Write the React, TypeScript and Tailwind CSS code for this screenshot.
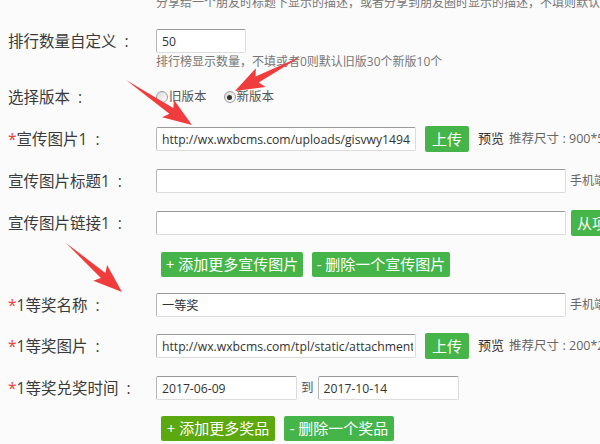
import React from "react";

const FONT = "font-['Open_Sans','Noto_Sans_CJK_SC',sans-serif]";

// Chinese full-width colon drawn centred in its box, the way the page's font does it
function Colon({ w }: { w: string }) {
  return <span className={`inline-block text-center ${w}`}>:</span>;
}

function Label({ required, children }: { required?: boolean; children: React.ReactNode }) {
  return (
    <div className="w-[148px] shrink-0 whitespace-nowrap text-[15.5px] leading-[24px] text-[#3a3a3a]">
      {required && <span className="text-[#e8413c]">*</span>}
      {children}
      <Colon w="w-[20px]" />
    </div>
  );
}

function TextInput({ value = "", width }: { value?: string; width: string }) {
  return (
    <input
      readOnly
      value={value}
      className={`${width} h-[24px] shrink-0 rounded-[2px] border border-t-[#9a9a9a] border-l-[#b8b8b8] border-r-[#dcdcdc] border-b-[#dcdcdc] bg-white pl-[5px] pr-[2px] text-[12.2px] text-[#333] outline-none ${FONT}`}
    />
  );
}

function GreenButton({ children, className = "" }: { children: React.ReactNode; className?: string }) {
  return (
    <button
      className={`flex h-[25px] shrink-0 items-center justify-center whitespace-nowrap rounded-[2px] text-[15px] text-white ${className}`}
    >
      {children}
    </button>
  );
}

function UploadExtras({ size }: { size: string }) {
  return (
    <>
      <GreenButton className="ml-[9px] h-[26px] w-[44px] bg-[#45b549]">上传</GreenButton>
      <span className="ml-[9px] whitespace-nowrap text-[13px] text-[#333]">预览</span>
      <span className="ml-[5px] whitespace-nowrap text-[12.5px] text-[#666]">
        推荐尺寸
        <Colon w="w-[10px]" />
        {size}
      </span>
    </>
  );
}

function Radio({ checked }: { checked?: boolean }) {
  return (
    <span className="flex h-[12px] w-[12px] shrink-0 items-center justify-center rounded-full border border-[#9c9c9c] bg-gradient-to-br from-[#d9d9d9] to-white">
      {checked && <span className="h-[5px] w-[5px] rounded-full bg-[#333]" />}
    </span>
  );
}

type Arrow = [number, number, number, number];

const arrows: Arrow[] = [
  [302, 56, 235, 91],
  [126, 80, 192, 125],
  [66, 243, 122, 292],
];

function arrowPoints([x1, y1, x2, y2]: Arrow) {
  const dx = x2 - x1;
  const dy = y2 - y1;
  const len = Math.hypot(dx, dy);
  const ux = dx / len;
  const uy = dy / len;
  const nx = -uy;
  const ny = ux;
  const hl = 25;
  const hw = 10.5;
  const sw = 3.4;
  const notch = 4;
  const local: [number, number][] = [
    [0, 0],
    [len - hl, sw],
    [len - hl - notch, hw],
    [len, 0],
    [len - hl - notch, -hw],
    [len - hl, -sw],
  ];
  return local
    .map(([a, p]) => `${(x1 + a * ux + p * nx).toFixed(1)},${(y1 + a * uy + p * ny).toFixed(1)}`)
    .join(" ");
}

export default function App() {
  return (
    <div className={`relative h-[444px] w-[600px] overflow-hidden bg-[#fbfbfb] ${FONT}`}>
      <div className="flex flex-col pl-[8px]">
        {/* cut-off hint from the previous field */}
        <div className="-mt-[6px] flex h-[18px] items-center">
          <div className="w-[148px] shrink-0" />
          <span className="whitespace-nowrap text-[12px] leading-[18px] text-[#777]">
            分享给一个朋友时标题下显示的描述，或者分享到朋友圈时显示的描述，不填则默认
          </span>
        </div>

        <div className="mt-[17px] flex items-center">
          <Label>排行数量自定义</Label>
          <TextInput value="50" width="w-[90px]" />
        </div>
        <div className="flex h-[18px] items-center">
          <div className="w-[148px] shrink-0" />
          <span className="whitespace-nowrap text-[12px] leading-[18px] text-[#777]">
            排行榜显示数量，不填或者0则默认旧版30个新版10个
          </span>
        </div>

        <div className="mt-[14px] flex h-[24px] items-center">
          <Label>选择版本</Label>
          <div className="flex items-center text-[12.5px] text-[#555]">
            <Radio />
            <span className="ml-[1px]">旧版本</span>
            <span className="ml-[17px]" />
            <Radio checked />
            <span className="ml-[1px]">新版本</span>
          </div>
        </div>

        <div className="mt-[17px] flex items-center">
          <Label required>宣传图片1</Label>
          <TextInput value="http://wx.wxbcms.com/uploads/gisvwy1494" width="w-[260px]" />
          <UploadExtras size="900*500" />
        </div>

        <div className="mt-[17px] flex items-center">
          <Label>宣传图片标题1</Label>
          <TextInput width="w-[410px]" />
          <span className="ml-[4px] whitespace-nowrap text-[12px] text-[#666]">手机端</span>
        </div>

        <div className="mt-[17px] flex items-center">
          <Label>宣传图片链接1</Label>
          <TextInput width="w-[410px]" />
          <GreenButton className="ml-[5px] h-[26px] w-[40px] justify-start bg-[#45b549] pl-[6px]">
            从项
          </GreenButton>
        </div>

        <div className="mt-[16px] flex items-center">
          <div className="w-[153px] shrink-0" />
          <GreenButton className="w-[142px] bg-[#45b549]">+ 添加更多宣传图片</GreenButton>
          <GreenButton className="ml-[9px] w-[138px] bg-[#45b549]">- 删除一个宣传图片</GreenButton>
        </div>

        <div className="mt-[16px] flex items-center">
          <Label required>1等奖名称</Label>
          <TextInput value="一等奖" width="w-[410px]" />
          <span className="ml-[4px] whitespace-nowrap text-[12px] text-[#666]">手机端</span>
        </div>

        <div className="mt-[16px] flex items-center">
          <Label required>1等奖图片</Label>
          <TextInput value="http://wx.wxbcms.com/tpl/static/attachment/focus" width="w-[260px]" />
          <UploadExtras size="200*200" />
        </div>

        <div className="mt-[17px] flex items-center">
          <Label required>1等奖兑奖时间</Label>
          <TextInput value="2017-06-09" width="w-[141px]" />
          <span className="mx-[4px] text-[12.5px] text-[#555]">到</span>
          <TextInput value="2017-10-14" width="w-[141px]" />
        </div>

        <div className="mt-[16px] flex items-center">
          <div className="w-[153px] shrink-0" />
          <GreenButton className="w-[114px] bg-[#5ba80f]">+ 添加更多奖品</GreenButton>
          <GreenButton className="ml-[9px] w-[110px] bg-[#45b549]">- 删除一个奖品</GreenButton>
        </div>
      </div>

      {/* red annotation arrows drawn over the form */}
      <svg className="pointer-events-none absolute inset-0" width={600} height={444}>
        {arrows.map((a, i) => (
          <polygon key={i} points={arrowPoints(a)} fill="#f03c3c" />
        ))}
      </svg>
    </div>
  );
}
